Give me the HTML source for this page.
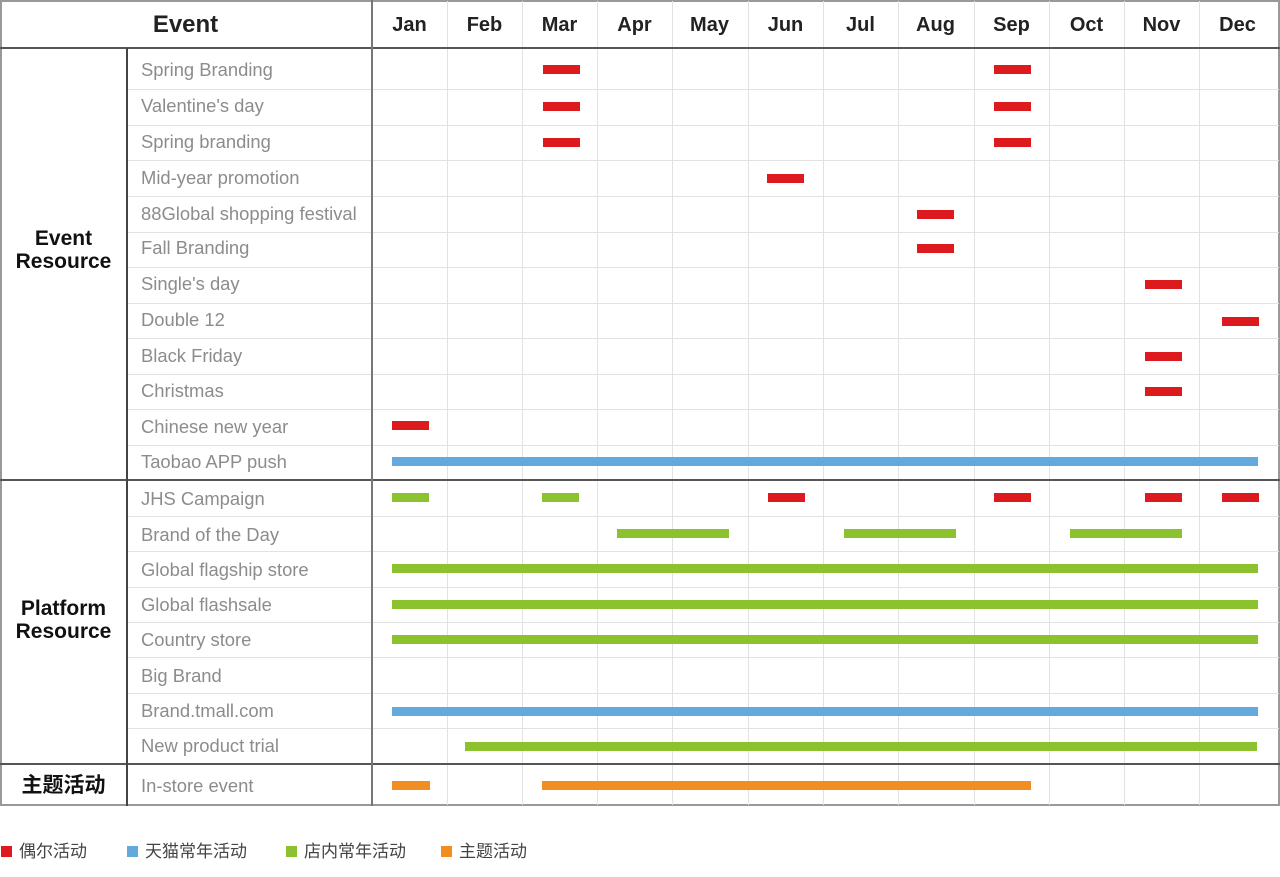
<!DOCTYPE html>
<html><head><meta charset="utf-8"><style>
*{margin:0;padding:0;box-sizing:border-box}
body{width:1280px;height:877px;background:#fff;position:relative;overflow:hidden;font-family:"Liberation Sans","Noto Sans CJK SC",sans-serif}
div{position:absolute}
.h{height:1px;background:#e2e2e2;left:127px;width:1152px}
.v{width:1px;background:#e2e2e2;top:1px;height:804px}
.H{height:2px;background:#555;left:0;width:1280px}
.m{top:0;height:48px;width:75px;text-align:center;line-height:50px;font-size:20px;font-weight:bold;color:#222}
.n{left:141px;font-size:18.4px;color:#8c8c8c;line-height:20px}
.r{height:9px;background:#dd1a1e}.b{height:9px;background:#64a9dc}.g{height:9px;background:#8cc22e}.o{height:9px;background:#f18d21}
.grp{left:0;width:127px;text-align:center;font-weight:bold;font-size:21px;line-height:23px;color:#111}
.lg{top:842px;font-size:17px;color:#444;line-height:19px}
.lg span{display:inline-block;width:11px;height:11px;margin-right:7px;vertical-align:0px}
</style></head><body>
<div style="left:0;top:0;width:1280px;height:806px;border:2px solid #999"></div>
<div class="h" style="top:89px"></div><div class="h" style="top:125px"></div><div class="h" style="top:160px"></div><div class="h" style="top:196px"></div><div class="h" style="top:232px"></div><div class="h" style="top:267px"></div><div class="h" style="top:303px"></div><div class="h" style="top:338px"></div><div class="h" style="top:374px"></div><div class="h" style="top:409px"></div><div class="h" style="top:445px"></div><div class="h" style="top:516px"></div><div class="h" style="top:551px"></div><div class="h" style="top:587px"></div><div class="h" style="top:622px"></div><div class="h" style="top:657px"></div><div class="h" style="top:693px"></div><div class="h" style="top:728px"></div>
<div class="v" style="left:447px"></div><div class="v" style="left:522px"></div><div class="v" style="left:597px"></div><div class="v" style="left:672px"></div><div class="v" style="left:748px"></div><div class="v" style="left:823px"></div><div class="v" style="left:898px"></div><div class="v" style="left:974px"></div><div class="v" style="left:1049px"></div><div class="v" style="left:1124px"></div><div class="v" style="left:1199px"></div>
<div class="H" style="top:47px"></div><div class="H" style="top:479px"></div><div class="H" style="top:763px"></div>
<div style="left:371px;top:0;width:2px;height:806px;background:#777"></div>
<div style="left:126px;top:48px;width:2px;height:758px;background:#444"></div>
<div style="left:0;top:0;width:371px;height:48px;text-align:center;line-height:50px;font-size:24px;font-weight:bold;color:#222">Event</div>
<div class="m" style="left:372px">Jan</div><div class="m" style="left:447px">Feb</div><div class="m" style="left:522px">Mar</div><div class="m" style="left:597px">Apr</div><div class="m" style="left:672px">May</div><div class="m" style="left:748px">Jun</div><div class="m" style="left:823px">Jul</div><div class="m" style="left:898px">Aug</div><div class="m" style="left:974px">Sep</div><div class="m" style="left:1049px">Oct</div><div class="m" style="left:1124px">Nov</div><div class="m" style="left:1200px">Dec</div>
<div class="grp" style="top:227px">Event<br>Resource</div>
<div class="grp" style="top:597px">Platform<br>Resource</div>
<div class="grp" style="top:774px;font-size:21px">主题活动</div>
<div class="n" style="top:60px">Spring Branding</div>
<div class="n" style="top:96px">Valentine's day</div>
<div class="n" style="top:132px">Spring branding</div>
<div class="n" style="top:168px">Mid-year promotion</div>
<div class="n" style="top:204px">88Global shopping festival</div>
<div class="n" style="top:238px">Fall Branding</div>
<div class="n" style="top:274px">Single's day</div>
<div class="n" style="top:310px">Double 12</div>
<div class="n" style="top:346px">Black Friday</div>
<div class="n" style="top:381px">Christmas</div>
<div class="n" style="top:417px">Chinese new year</div>
<div class="n" style="top:452px">Taobao APP push</div>
<div class="n" style="top:489px">JHS Campaign</div>
<div class="n" style="top:525px">Brand of the Day</div>
<div class="n" style="top:560px">Global flagship store</div>
<div class="n" style="top:595px">Global flashsale</div>
<div class="n" style="top:630px">Country store</div>
<div class="n" style="top:666px">Big Brand</div>
<div class="n" style="top:701px">Brand.tmall.com</div>
<div class="n" style="top:736px">New product trial</div>
<div class="n" style="top:776px">In-store event</div>
<div class="r" style="left:543px;top:65px;width:37px"></div><div class="r" style="left:994px;top:65px;width:37px"></div>
<div class="r" style="left:543px;top:102px;width:37px"></div><div class="r" style="left:994px;top:102px;width:37px"></div>
<div class="r" style="left:543px;top:138px;width:37px"></div><div class="r" style="left:994px;top:138px;width:37px"></div>
<div class="r" style="left:767px;top:174px;width:37px"></div>
<div class="r" style="left:917px;top:210px;width:37px"></div>
<div class="r" style="left:917px;top:244px;width:37px"></div>
<div class="r" style="left:1145px;top:280px;width:37px"></div>
<div class="r" style="left:1222px;top:317px;width:37px"></div>
<div class="r" style="left:1145px;top:352px;width:37px"></div>
<div class="r" style="left:1145px;top:387px;width:37px"></div>
<div class="r" style="left:392px;top:421px;width:37px"></div>
<div class="b" style="left:392px;top:457px;width:866px"></div>
<div class="g" style="left:392px;top:493px;width:37px"></div><div class="g" style="left:542px;top:493px;width:37px"></div>
<div class="r" style="left:768px;top:493px;width:37px"></div><div class="r" style="left:994px;top:493px;width:37px"></div><div class="r" style="left:1145px;top:493px;width:37px"></div><div class="r" style="left:1222px;top:493px;width:37px"></div>
<div class="g" style="left:617px;top:529px;width:112px"></div><div class="g" style="left:844px;top:529px;width:112px"></div><div class="g" style="left:1070px;top:529px;width:112px"></div>
<div class="g" style="left:392px;top:564px;width:866px"></div>
<div class="g" style="left:392px;top:600px;width:866px"></div>
<div class="g" style="left:392px;top:635px;width:866px"></div>
<div class="b" style="left:392px;top:707px;width:866px"></div>
<div class="g" style="left:465px;top:742px;width:792px"></div>
<div class="o" style="left:392px;top:781px;width:38px"></div><div class="o" style="left:542px;top:781px;width:489px"></div>
<div class="lg" style="left:1px"><span style="background:#dd1a1e"></span>偶尔活动</div>
<div class="lg" style="left:127px"><span style="background:#64a9dc"></span>天猫常年活动</div>
<div class="lg" style="left:286px"><span style="background:#8cc22e"></span>店内常年活动</div>
<div class="lg" style="left:441px"><span style="background:#f18d21"></span>主题活动</div>
</body></html>
